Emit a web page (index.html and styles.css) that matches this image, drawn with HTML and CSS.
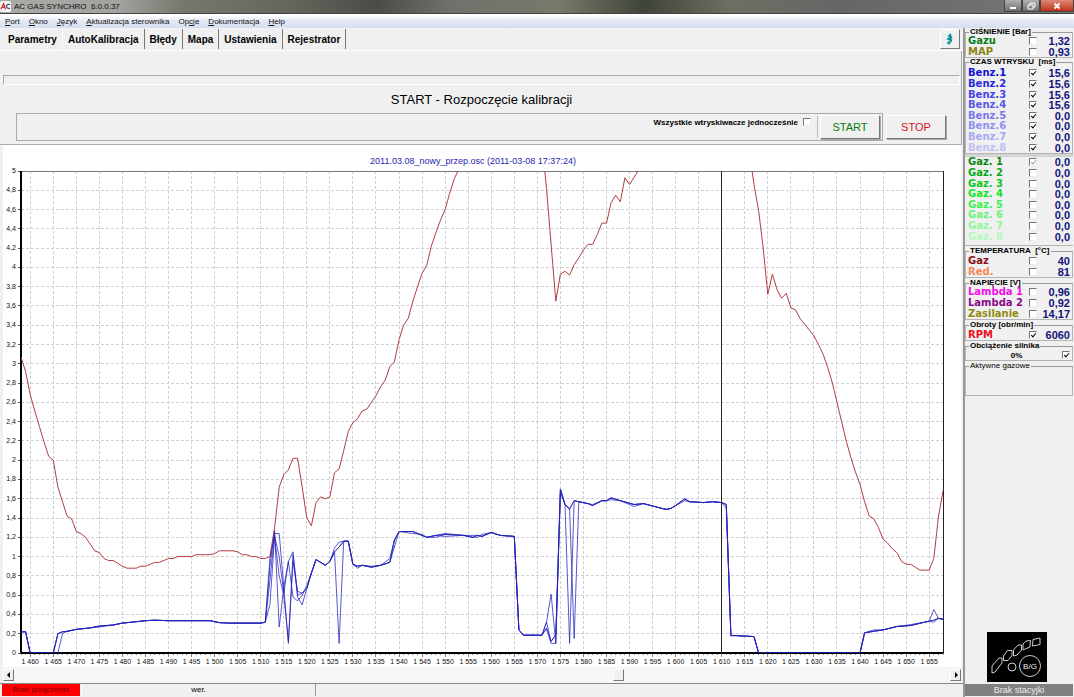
FILE: index.html
```html
<!DOCTYPE html>
<html lang="pl">

<head>
    <meta charset="utf-8">
    <meta name="viewport" content="width=device-width, initial-scale=1.0">
    <title>AC GAS SYNCHRO 6.0.0.37</title>
    <link rel="stylesheet" href="styles.css">
</head>

<body>

    <header class="titlebar">
        <svg class="app-icon" viewBox="0 0 12 12">
            <rect width="12" height="12" rx="2" fill="#f4f4f6" />
            <path d="M1 9 L4 3 L6 9 M2 7 H6" fill="none" stroke="#c33" stroke-width="1.4" />
            <path d="M11 4 C7 2 5 9 11 8" fill="none" stroke="#3a4a8a" stroke-width="1.3" />
        </svg>
        <span class="title">AC GAS SYNCHRO&nbsp; 6.0.0.37</span>
        <div class="window-buttons">
            <button class="win" aria-label="Minimalizuj"><svg viewBox="0 0 10 8"><path d="M2 5h6v2h-6z" fill="#fff" /></svg></button>
            <button class="win" aria-label="Przywróć"><svg viewBox="0 0 10 8"><path d="M4 3V1h5v4H7M2 3h5v4H2z" fill="none" stroke="#fff" /></svg></button>
            <button class="win close" aria-label="Zamknij"><svg viewBox="0 0 10 8"><path d="M2.500 1.500l5 5M7.500 1.500l-5 5" stroke="#fff" stroke-width="1.800" /></svg></button>
        </div>
    </header>

    <nav class="menu">
        <a href="#"><u>P</u>ort</a>
        <a href="#"><u>O</u>kno</a>
        <a href="#"><u>J</u>ęzyk</a>
        <a href="#"><u>A</u>ktualizacja sterownika</a>
        <a href="#">Op<u>c</u>je</a>
        <a href="#"><u>D</u>okumentacja</a>
        <a href="#"><u>H</u>elp</a>
    </nav>

    <div class="workspace">
        <main>
            <div class="tabs">
                <button class="tab">Parametry</button>
                <button class="tab valgt">AutoKalibracja</button>
                <button class="tab">Błędy</button>
                <button class="tab">Mapa</button>
                <button class="tab">Ustawienia</button>
                <button class="tab">Rejestrator</button>
                <button class="info" aria-label="Informacje">
                    <svg viewBox="0 0 8 12"><path d="M5 1L3 3l2 1-3 2 3 1-3 3 2 1" fill="none" stroke="#0a9a9a" stroke-width="1.800" /><path d="M5 2L4 3l2 2-2 1 2 2-2 2" fill="none" stroke="#045" stroke-width=".6" /></svg>
                </button>
            </div>

            <section class="kalibracja">
                <div class="postep"></div>
                <h1>START - Rozpoczęcie kalibracji</h1>
                <div class="sterowanie">
                    <div class="ramka">
                        <label class="wszystkie">Wszystkie wtryskiwacze jednocześnie <input type="checkbox"></label>
                        <button class="akcja start">START</button>
                    </div>
                    <button class="akcja stop">STOP</button>
                </div>
            </section>

            <svg id="wykres" viewBox="0 0 958 522"></svg>

            <div class="scroll">
                <button aria-label="W lewo"><svg viewBox="0 0 6 6"><path d="M4 0v6L1 3z" /></svg></button>
                <div class="track"><div class="thumb"></div></div>
                <button aria-label="W prawo"><svg viewBox="0 0 6 6"><path d="M2 0v6l3-3z" /></svg></button>
            </div>

            <footer class="status">
                <div class="polaczenie">Brak połączenia</div>
                <div class="wersja">wer.</div>
                <div class="reszta"></div>
            </footer>
        </main>

        <aside>
            <fieldset>
                <legend>CIŚNIENIE [Bar]</legend>
                <div class="rows two" data-grupa="cisnienie"></div>
            </fieldset>
            <fieldset class="wtrysk">
                <legend>CZAS WTRYSKU&nbsp; [ms]</legend>
                <div class="rows eight" data-grupa="benzyna"></div>
            </fieldset>
            <div class="splitter"></div>
            <div class="gaz">
                <div class="rows eight" data-grupa="gaz"></div>
            </div>
            <fieldset class="temp">
                <legend>TEMPERATURA&nbsp; [°C]</legend>
                <div class="rows two" data-grupa="temperatura"></div>
            </fieldset>
            <fieldset>
                <legend>NAPIĘCIE [V]</legend>
                <div class="rows three" data-grupa="napiecie"></div>
            </fieldset>
            <fieldset>
                <legend>Obroty [obr/min]</legend>
                <div class="rows one" data-grupa="obroty"></div>
            </fieldset>
            <fieldset>
                <legend>Obciążenie silnika</legend>
                <label class="obciazenie"><span>0%</span><input type="checkbox" checked></label>
            </fieldset>
            <fieldset class="aktywne">
                <legend>Aktywne gazowe</legend>
            </fieldset>

            <svg class="przelacznik" viewBox="0 0 60 50">
                <rect width="60" height="50" />
                <g fill="none" stroke="#ccc">
                    <path d="M5 41v-7l7-8h3v5l-7 9z" />
                    <path d="M16.500 28.500V24l4-5.500H25v5l-4 5z" />
                    <path d="M26.500 24v-6l4.500-5h3.500v5l-4.500 5z" />
                    <path d="M36 18v-6l3-3 4.500-.5-.5 6.500-5 2z" />
                    <path d="M45.500 14l.5-6.500 7-1.500v6.500z" />
                    <circle cx="25" cy="35" r="4" />
                    <circle cx="43" cy="34" r="10.500" />
                </g>
                <text x="43" y="37" text-anchor="middle">B/G</text>
            </svg>
            <div class="stacyjka">Brak stacyjki</div>
        </aside>
    </div>

    <script src="script.js"></script>
</body>

</html>
```

FILE: styles.css
```css
* {
    box-sizing: border-box;
}

body {
    margin: 0;
    min-height: 100vh;
    display: flex;
    flex-direction: column;
    background-color: #f0f0f0;
    font-family: "Liberation Sans", Arial, sans-serif;
    font-size: 8px;
    color: #000;
}

button {
    font-family: inherit;
    padding: 0;
    border: 0;
    background: none;
}

.titlebar {
    height: 14px;
    display: flex;
    align-items: center;
    background: linear-gradient(90deg, #aaa9a6 0, #a3a29e 11%, #77776f 17%, #62645a 28%, #4a4c48 35%, #70716c 42%, #77796a 52%, #3f4538 60%, #6d6f62 68%, #666 78%, #777 100%);
    border-bottom: 1px solid #444;
}

.app-icon {
    width: 11px;
    height: 11px;
    margin-right: 3px;
}

.title {
    color: #111;
}

.window-buttons {
    display: flex;
    align-self: flex-start;
    margin-left: auto;
}

.win {
    width: 18px;
    height: 12px;
    background: linear-gradient(#b0b0b0, #707070);
    border: 1px solid #444;
    border-top: 0;
    line-height: 0;
}

.win svg {
    width: 10px;
    height: 8px;
}

.close {
    width: 34px;
    background: linear-gradient(#dd8a78, #c03218);
}

.menu {
    height: 14px;
    padding: 0 5px;
    display: flex;
    align-items: center;
    gap: 9px;
    background: linear-gradient(#fff 10%, #e4e9f5 50%, #d6deef);
}

.menu a {
    color: #111;
    text-decoration: none;
}

.workspace {
    flex: 1;
    display: flex;
}

main {
    flex: 1;
    min-width: 0;
    display: flex;
    flex-direction: column;
}

.tabs {
    height: 23px;
    padding: 1px 3px;
    display: flex;
    border-bottom: 1px solid #fff;
}

.tab {
    padding: 0 5px;
    font-size: 10px;
    font-weight: bold;
    border-right: 1px solid #777;
}

.tab:first-child {
    border-right-color: #fafafa;
}

.valgt {
    padding-top: 1px;
}

.info {
    width: 20px;
    height: 20px;
    margin-left: auto;
    line-height: 0;
    border: 1px solid;
    border-color: #fff #777 #777 #fff;
}

.info svg {
    width: 8px;
    height: 12px;
}

.kalibracja {
    padding: 24px 1px 3px 3px;
    margin-right: 1px;
    border-right: 1px solid #aaa;
    border-bottom: 1px solid #aaa;
}

.postep {
    height: 10px;
    border: 1px solid;
    border-color: #aaa #fff #fff #aaa;
}

h1 {
    margin: 0;
    height: 28px;
    line-height: 30px;
    font-size: 13px;
    font-weight: normal;
    text-align: center;
}

.sterowanie {
    display: flex;
    align-items: center;
    gap: 3px;
    padding: 0 14px 0 13px;
}

.ramka {
    flex: 1;
    height: 28px;
    padding: 1px 2px;
    display: flex;
    justify-content: flex-end;
    align-items: center;
    border: 1px solid #aaa;
}

.wszystkie {
    height: 22px;
    padding: 0 6px 10px 0;
    margin-right: 2px;
    display: flex;
    align-items: center;
    gap: 5px;
    font-weight: bold;
    border-right: 1px solid #bbb;
}

.akcja {
    width: 60px;
    height: 24px;
    font-size: 11px;
    border: 1px solid;
    border-color: #fff #777 #777 #fff;
    box-shadow: 1px 1px 0 #aaa;
}

.start {
    color: #087a10;
}

.stop {
    color: #d8101c;
}

input[type="checkbox"] {
    appearance: none;
    flex: none;
    width: 8px;
    height: 8px;
    margin: 0;
    position: relative;
    background-color: #fff;
    border: 1px solid;
    border-color: #777 #eee #eee #777;
}

input[type="checkbox"]:checked::before {
    content: "";
    position: absolute;
    left: 2px;
    top: 0;
    width: 2px;
    height: 4px;
    border: solid #000;
    border-width: 0 1px 1px 0;
    transform: rotate(40deg);
}

input[type="checkbox"]:disabled::before {
    border-color: #999;
}

/* wykres */

#wykres {
    display: block;
    margin: 0 2px 0 3px;
    background-color: #fff;
}

#wykres text {
    font-size: 7px;
    fill: #111;
}

#wykres .tytul {
    font-size: 9px;
    fill: #2626b4;
}

.siatka {
    stroke: #d0d0d0;
    stroke-dasharray: 3 2;
}

.linia {
    fill: none;
    stroke-width: 1;
    stroke-linejoin: round;
}

.rpm {
    stroke: #b43c40;
}

.benz {
    stroke: #2222bc;
    stroke-opacity: .75;
}

.scroll {
    height: 16px;
    margin: 0 2px 0 3px;
    padding: 2px 0 1px;
    display: flex;
    background-color: #f6f6f6;
}

.scroll button,
.thumb {
    width: 11px;
    height: 12px;
    line-height: 0;
    background-color: #f0f0f0;
    border: 1px solid;
    border-color: #fff #777 #777 #fff;
}

.scroll button svg {
    width: 6px;
    height: 6px;
}

.track {
    flex: 1;
}

.thumb {
    margin-left: 64%;
}

.status {
    flex: 1;
    min-height: 14px;
    display: flex;
    padding: 0 0 1px 2px;
    gap: 1px;
    line-height: 12px;
    text-align: center;
    border-top: 1px solid #888;
}

.polaczenie {
    width: 78px;
    color: #800000;
    background-color: #f00;
}

.wersja {
    width: 235px;
    border-left: 1px solid #fff;
    border-right: 1px solid #999;
}

/* panel boczny */

aside {
    width: 111px;
    padding-right: 1px;
    display: flex;
    flex-direction: column;
    border-left: 2px solid #999;
}

fieldset {
    min-width: 0;
    margin: 0 0 1px;
    padding: 0 2px;
    border: 1px solid #b4b4b4;
    border-top-color: #999;
}

fieldset:first-child {
    margin-bottom: 0;
}

legend {
    height: 8px;
    margin-left: 1px;
    padding: 0 1px;
    line-height: 8px;
    font-weight: bold;
    white-space: nowrap;
}

.wtrysk {
    padding-top: 2px;
    margin: 0;
}

.splitter {
    height: 3px;
    background-color: #d4d4d4;
}

.gaz {
    margin-bottom: 1px;
    padding: 0 3px 3px;
    border-bottom: 1px solid #b4b4b4;
}

.temp {
    padding-top: 1px;
}

.rows {
    display: grid;
    grid-auto-rows: 1fr;
}

.one {
    height: 11px;
}

.two {
    height: 21px;
}

.three {
    height: 32px;
}

.eight {
    height: 85px;
}

.row {
    min-height: 0;
    display: grid;
    grid-template-columns: 1fr 8px 33px;
    align-items: center;
    font-size: 10px;
    line-height: 10px;
    font-family: "DejaVu Sans", Verdana, sans-serif;
    font-weight: bold;
    white-space: nowrap;
}

.row output {
    font-family: "Liberation Sans", Arial, sans-serif;
    font-size: 11px;
    text-align: right;
    color: #14147c;
}

.obciazenie {
    height: 10px;
    display: flex;
    align-items: center;
    font-weight: bold;
}

.obciazenie span {
    flex: 1;
    padding-left: 3px;
    text-align: center;
}

.aktywne {
    height: 34px;
}

.aktywne legend {
    font-weight: normal;
}

.przelacznik {
    width: 60px;
    height: 50px;
    margin: auto 0 2px 22px;
}

.przelacznik text {
    font-size: 8px;
    fill: #eee;
}

.stacyjka {
    height: 12px;
    margin-bottom: 1px;
    line-height: 12px;
    font-size: 9px;
    text-align: center;
    color: #eee;
    background-color: #808080;
}
```

FILE: script.js
```js
const SVG = "http://www.w3.org/2000/svg";

// nazwa, kolor, wartość, zaznaczony, nieaktywny
const grupy = {
    cisnienie: [
        ["Gazu", "#0a7a1e", "1,32"],
        ["MAP", "#8a8414", "0,93"]
    ],
    benzyna: [
        ["Benz.1", "#1010d8", "15,6", true],
        ["Benz.2", "#2828e4", "15,6", true],
        ["Benz.3", "#4444e8", "15,6", true],
        ["Benz.4", "#5858ec", "15,6", true],
        ["Benz.5", "#7878ec", "0,0", true],
        ["Benz.6", "#9090f0", "0,0", true],
        ["Benz.7", "#a8a8f4", "0,0", true],
        ["Benz.8", "#c0c0f6", "0,0", true]
    ],
    gaz: [
        ["Gaz. 1", "#088a10", "0,0", true, true],
        ["Gaz. 2", "#08a814", "0,0"],
        ["Gaz. 3", "#0cc81c", "0,0"],
        ["Gaz. 4", "#10e828", "0,0"],
        ["Gaz. 5", "#3cf050", "0,0"],
        ["Gaz. 6", "#68f478", "0,0"],
        ["Gaz. 7", "#90f89c", "0,0"],
        ["Gaz. 8", "#b4fabc", "0,0"]
    ],
    temperatura: [
        ["Gaz", "#8c0c14", "40"],
        ["Red.", "#f88850", "81"]
    ],
    napiecie: [
        ["Lambda 1", "#f010e8", "0,96"],
        ["Lambda 2", "#8a0c8a", "0,92"],
        ["Zasilanie", "#908a10", "14,17"]
    ],
    obroty: [
        ["RPM", "#f01020", "6060", true]
    ]
};

document.querySelectorAll(".rows").forEach(dest => {
    grupy[dest.dataset.grupa].forEach(([nazwa, kolor, wartosc, on, off]) => {
        dest.insertAdjacentHTML("beforeend", `
            <label class="row">
                <span style="color:${kolor}">${nazwa}</span>
                <input type="checkbox" ${on ? "checked" : ""} ${off ? "disabled" : ""}>
                <output>${wartosc}</output>
            </label>`);
    });
});

// obszar wykresu
const lewo = 18, gora = 26, szer = 922, wys = 482;
const px = t => lewo + (t - 1458) * szer / 200;
const py = v => gora + wys - v * wys / 5;

const rpm = [
    [1458, 3.07], [1459, 2.92], [1460, 2.68], [1461, 2.51], [1462, 2.35], [1463, 2.19], [1464, 2.04], [1465, 2],
    [1466, 1.72], [1467, 1.57], [1468, 1.42], [1469, 1.39], [1470, 1.26], [1471, 1.24], [1472, 1.2], [1473, 1.13],
    [1474, 1.06], [1475, 1.04], [1476, .98], [1477, .96], [1478, .96], [1479, .93], [1480, .9], [1481, .88],
    [1483, .88], [1484, .9], [1485, .9], [1486, .92], [1487, .94], [1488, .94], [1490, .98], [1491, .98],
    [1492, 1], [1495, 1], [1496, 1.02], [1499, 1.02], [1500, 1.03], [1501, 1.06], [1504, 1.06], [1505, 1.05],
    [1506, 1.02], [1507, 1.02], [1508, 1], [1509, 1], [1510, .98], [1511, .98], [1512, 1], [1513, 1.3],
    [1514, 1.72], [1515, 1.85], [1516, 1.9], [1517, 2.02], [1518, 2.02], [1519, 1.72], [1520, 1.4], [1521, 1.32],
    [1522, 1.56], [1523, 1.62], [1524, 1.6], [1525, 1.62], [1526, 1.87], [1527, 1.91], [1528, 2.1], [1529, 2.3],
    [1530, 2.39], [1531, 2.43], [1532, 2.51], [1533, 2.53], [1534, 2.6], [1535, 2.67], [1536, 2.76], [1537, 2.83],
    [1538, 2.97], [1539, 3.02], [1540, 3.25], [1541, 3.4], [1542, 3.47], [1543, 3.65], [1544, 3.8], [1545, 3.94],
    [1546, 4.02], [1547, 4.22], [1548, 4.36], [1549, 4.49], [1550, 4.6], [1551, 4.77], [1552, 4.92], [1553, 5.02],
    [1554, 5.3], [1571, 5.3], [1572, 4.82], [1573, 4.24], [1574, 3.65], [1575, 3.93], [1576, 3.96], [1577, 3.92],
    [1578, 4.03], [1579, 4.1], [1580, 4.18], [1581, 4.24], [1582, 4.24], [1583, 4.34], [1584, 4.46], [1585, 4.46],
    [1586, 4.67], [1587, 4.75], [1588, 4.68], [1589, 4.93], [1590, 4.86], [1592, 5.01], [1593, 5.3], [1616, 5.2],
    [1617, 4.86], [1618, 4.59], [1619, 4.2], [1620, 3.72], [1621, 3.93], [1622, 3.77], [1623, 3.68], [1624, 3.73],
    [1625, 3.58], [1626, 3.56], [1627, 3.47], [1628, 3.41], [1629, 3.35], [1630, 3.29], [1631, 3.2], [1632, 3.1],
    [1633, 2.96], [1634, 2.8], [1635, 2.6], [1636, 2.4], [1637, 2.2], [1638, 2.03], [1639, 1.88], [1640, 1.75],
    [1641, 1.57], [1642, 1.42], [1643, 1.39], [1644, 1.3], [1645, 1.18], [1646, 1.14], [1647, 1.08], [1648, 1.04],
    [1649, .95], [1650, .92], [1651, .92], [1652, .89], [1653, .86], [1655, .86], [1656, .98], [1657, 1.41], [1658, 1.68]
];

// wspólny przebieg wtryskiwaczy
const baza = [
    [1458, .22], [1459, .22], [1460, 0], [1465, 0], [1466, .2], [1467, .22], [1468, .225], [1470, .245], [1473, .26],
    [1475, .28], [1478, .29], [1480, .31], [1482, .32], [1485, .335], [1487, .34], [1490, .335], [1499, .335],
    [1501, .315], [1503, .31], [1510, .31], [1511, .32], [1512, .9], [1513, 1.27], [1514, .27], [1515, .68],
    [1516, .95], [1517, 1.05], [1518, .6], [1519, .62], [1520, .67], [1521, .83], [1522, .97], [1523, .94],
    [1524, .91], [1525, .95], [1526, 1.05], [1527, 1.1], [1528, 1.16], [1529, 1.16], [1530, .92], [1531, .9],
    [1532, .91], [1534, .89], [1536, .91], [1538, .94], [1539, 1.17], [1540, 1.26], [1543, 1.26], [1545, 1.22],
    [1546, 1.2], [1548, 1.22], [1550, 1.23], [1554, 1.22], [1556, 1.2], [1557, 1.22], [1558, 1.21], [1560, 1.25],
    [1562, 1.22], [1565, 1.21], [1566, .24], [1567, .185], [1571, .185], [1572, .32], [1573, .12], [1574, .19],
    [1575, 1.7], [1576, 1.54], [1577, 1.49], [1578, 1.58], [1579, 1.57], [1581, 1.55], [1582, 1.53], [1584, 1.58],
    [1585, 1.58], [1586, 1.61], [1588, 1.58], [1591, 1.54], [1593, 1.55], [1597, 1.5], [1598, 1.49], [1599, 1.5],
    [1600, 1.53], [1602, 1.6], [1603, 1.57], [1606, 1.56], [1608, 1.57], [1610, 1.56], [1611, 1.54], [1612, .18],
    [1613, .18], [1617, .17], [1618, 0], [1640, 0], [1641, .21], [1643, .225], [1645, .24], [1648, .275],
    [1651, .285], [1654, .32], [1655, .33], [1656, .34], [1657, .36], [1658, .35]
];

// odchyłki poszczególnych cylindrów
const cylindry = [
    { 1475: .27, 1527: .1, 1550: 1.24, 1572: .26, 1577: 1.5, 1582: 1.54, 1643: .24 },
    { 1512: .75, 1513: 1.24, 1514: 1.24, 1515: .68, 1516: .1, 1517: 1.02, 1518: .58, 1519: .5, 1526: 1.09, 1527: 1.15, 1531: .88, 1534: .9, 1548: 1.2, 1556: 1.22, 1573: .61, 1574: .1, 1577: .1, 1586: 1.59, 1656: .45 },
    { 1466: 0, 1467: .2, 1512: .5, 1513: 1.2, 1514: .8, 1515: .6, 1516: .12, 1517: .95, 1518: .64, 1538: .98, 1543: 1.24, 1545: 1.23, 1557: 1.2, 1558: 1.23, 1572: .25, 1573: .1, 1574: .1, 1578: .15, 1591: 1.52, 1602: 1.58 },
    { 1512: .98, 1513: 1.22, 1514: 1, 1515: .62, 1516: .95, 1517: .58, 1518: .54, 1519: .6, 1520: .7, 1539: 1.1, 1550: 1.21, 1575: 1.66, 1611: 1.5, 1651: .295, 1656: .32 }
];

const wykres = document.querySelector("#wykres");

function dodaj(tag, attrs, tekst) {
    const el = document.createElementNS(SVG, tag);
    for (const k in attrs) el.setAttribute(k, attrs[k]);
    if (tekst) el.textContent = tekst;
    wykres.appendChild(el);
    return el;
}

function kreska(x1, y1, x2, y2, attrs) {
    dodaj("line", { x1, y1, x2, y2, "shape-rendering": "crispEdges", stroke: "#555", ...attrs });
}

function seria(dane, klasa) {
    dodaj("polyline", {
        class: "linia " + klasa,
        points: dane.map(([t, v]) => px(t).toFixed(1) + "," + py(v).toFixed(1)).join(" "),
        "clip-path": "url(#pole)"
    });
}

wykres.innerHTML = `<clipPath id="pole"><rect x="${lewo}" y="${gora}" width="${szer}" height="${wys}"/></clipPath>`;
dodaj("text", { x: 470, y: 19, "text-anchor": "middle", class: "tytul" }, "2011.03.08_nowy_przep.osc (2011-03-08 17:37:24)");

for (let i = 0; i <= 25; i++) {
    const y = py(i / 5);
    if (i > 0 && i < 25) kreska(lewo, y, lewo + szer, y, { class: "siatka" });
    kreska(lewo - 3, y, lewo, y);
    dodaj("text", { x: 13, y: y + 2, "text-anchor": "end" }, String(i / 5).replace(".", ","));
}
for (let t = 1458; t <= 1658; t++) {
    const x = px(t);
    const pelna = t % 5 == 0;
    kreska(x, gora + wys, x, gora + wys + (pelna ? 4 : 2), { stroke: "#888" });
    if (pelna) {
        kreska(x, gora, x, gora + wys, { class: "siatka" });
        dodaj("text", { x: x, y: 519, "text-anchor": "middle" }, "1 " + (t - 1000));
    }
}

kreska(lewo, gora, lewo + szer, gora, { stroke: "#777" });
kreska(lewo + szer, gora, lewo + szer, gora + wys, { stroke: "#222" });
kreska(lewo, gora, lewo, gora + wys, { stroke: "#000", "stroke-width": 2 });
kreska(lewo, gora + wys, lewo + szer, gora + wys, { stroke: "#000", "stroke-width": 2 });

seria(rpm, "rpm");
cylindry.forEach(c => seria(baza.map(([t, v]) => [t, t in c ? c[t] : v]), "benz"));

// kursor
kreska(px(1610), gora, px(1610), gora + wys, { stroke: "#222" });
```
